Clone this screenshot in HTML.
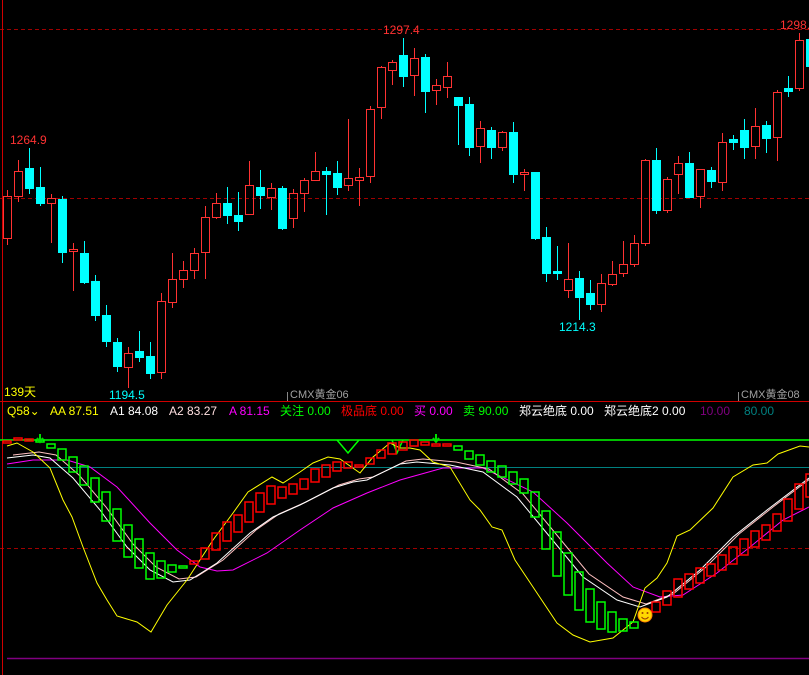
<!DOCTYPE html>
<html><head><meta charset="utf-8"><style>
html,body{margin:0;padding:0;background:#000;width:809px;height:675px;overflow:hidden}
#c{position:absolute;left:0;top:0}
.t{position:absolute;font-family:"Liberation Sans","Noto Sans CJK SC",sans-serif;font-size:12px;white-space:nowrap;line-height:14px}
</style></head><body>
<svg id="c" width="809" height="675" xmlns="http://www.w3.org/2000/svg"></svg>
<div class="t" style="left:10px;top:133px;color:#ff3232">1264.9</div>
<div class="t" style="left:383px;top:23px;color:#ff3232">1297.4</div>
<div class="t" style="left:780px;top:18px;color:#ff3232">1298.</div>
<div class="t" style="left:559px;top:320px;color:#00ffff">1214.3</div>
<div class="t" style="left:109px;top:388px;color:#00ffff">1194.5</div>
<div class="t" style="left:4px;top:385px;color:#ffff00">139天</div>
<div class="t" style="left:290px;top:388px;color:#a0a0a0;font-size:11px">CMX黄金06</div>
<div class="t" style="left:741px;top:388px;color:#a0a0a0;font-size:11px">CMX黄金08</div>
<div class="t" style="left:7px;top:404px;color:#ffff00">Q58⌄</div>
<div class="t" style="left:50px;top:404px;color:#ffff00">AA 87.51</div>
<div class="t" style="left:110px;top:404px;color:#ffffff">A1 84.08</div>
<div class="t" style="left:169px;top:404px;color:#ffe0e0">A2 83.27</div>
<div class="t" style="left:229px;top:404px;color:#ff00ff">A 81.15</div>
<div class="t" style="left:280px;top:404px;color:#00ff00">关注 0.00</div>
<div class="t" style="left:341px;top:404px;color:#ff0000">极品底 0.00</div>
<div class="t" style="left:414px;top:404px;color:#ff00ff">买 0.00</div>
<div class="t" style="left:463px;top:404px;color:#00ff00">卖 90.00</div>
<div class="t" style="left:519px;top:404px;color:#ffffff">郑云绝底 0.00</div>
<div class="t" style="left:604px;top:404px;color:#ffffff">郑云绝底2 0.00</div>
<div class="t" style="left:700px;top:404px;color:#800080">10.00</div>
<div class="t" style="left:744px;top:404px;color:#008080">80.00</div>
<script>
var s='';
function L(x1,y1,x2,y2,c,w,d){s+='<line x1="'+x1+'" y1="'+y1+'" x2="'+x2+'" y2="'+y2+'" stroke="'+c+'" stroke-width="'+(w||1)+'"'+(d?' stroke-dasharray="'+d+'"':'')+'/>';}
function P(pts,c,w){s+='<polyline fill="none" stroke="'+c+'" stroke-width="'+(w||1)+'" points="'+pts.map(function(p){return p[0]+','+p[1]}).join(' ')+'"/>';}
// grid
L(0,29.5,809,29.5,'#a00000',1,'4,3');
L(0,198.5,809,198.5,'#a00000',1,'4,3');
L(0,401.5,809,401.5,'#d00000',1);
L(0,548.5,809,548.5,'#a00000',1,'4,3');
L(2.5,0,2.5,675,'#d00000',1);
L(287.5,392,287.5,401,'#888',1);L(738.5,392,738.5,401,'#888',1);
// candles: x, type(u/d), top, bottom, hi, lo
var C=[[7,'u',196,238,190,245],[18,'u',171,196,160,202],[29,'d',168,188,148,194],[40,'d',187,203,167,206],[51,'u',198,203,194,243],[62,'d',199,252,196,263],[73,'u',249,251,243,291],[84,'d',253,282,241,284],[95,'d',281,315,275,321],[106,'d',315,341,305,347],[117,'d',342,366,338,372],[128,'u',353,367,347,388],[139,'d',351,357,331,362],[150,'d',356,373,342,379],[161,'u',301,372,293,379],[172,'u',279,302,253,308],[183,'u',270,279,261,288],[194,'u',253,270,248,279],[205,'u',217,252,206,279],[216,'u',203,217,193,219],[227,'d',203,215,187,224],[238,'d',215,221,192,231],[249,'u',185,214,161,214],[260,'d',187,195,170,209],
[271,'u',188,197,183,210],[282,'d',188,228,186,230],[293,'u',193,218,189,228],[304,'u',180,193,178,212],[315,'u',171,180,152,180],[326,'d',171,174,167,215],[337,'d',173,187,161,195],[348,'u',178,185,119,191],[359,'u',177,180,168,206],[370,'u',109,176,106,183],[381,'u',67,107,66,119],[392,'u',62,70,60,85],[403,'d',55,76,38,87],[414,'u',58,75,48,96],[425,'d',57,91,54,113],[436,'u',85,90,79,105],[447,'u',76,87,62,98],[458,'d',97,105,97,145],[469,'d',104,147,97,156],[480,'u',128,146,121,163],[491,'d',130,147,127,159],[502,'u',132,147,131,151],[513,'d',132,174,122,183],[524,'u',172,174,169,191],[535,'d',172,238,172,240],
[546,'d',237,273,227,282],[557,'d',271,273,246,280],[568,'u',279,290,243,298],[579,'d',278,297,271,320],[590,'d',293,304,280,310],[601,'u',283,304,274,312],[612,'u',274,284,261,286],[623,'u',264,273,241,277],[634,'u',243,264,235,267],[645,'u',160,243,159,246],[656,'d',160,210,148,214],[667,'u',179,210,177,213],[678,'u',163,174,156,194],[689,'d',163,197,152,198],[700,'u',169,196,169,208],[711,'d',170,181,167,188],[722,'u',142,182,133,191],[733,'d',139,142,135,150],[744,'d',130,147,119,159],[755,'u',126,146,108,159],[766,'d',125,138,121,153],[777,'u',92,137,90,161],[788,'d',88,91,76,97],[799,'u',40,88,33,91],[810,'d',39,66,36,70]];
C.forEach(function(c){var x=c[0],col=c[1]=='u'?'#ff3232':'#00ffff';
 L(x+.5,c[4],x+.5,c[2],col);L(x+.5,c[3],x+.5,c[5],col);
 var h=Math.max(c[3]-c[2],1);
 if(c[1]=='u')s+='<rect x="'+(x-3.5)+'" y="'+(c[2]+.5)+'" width="8" height="'+(h)+'" fill="none" stroke="'+col+'"/>';
 else s+='<rect x="'+(x-4)+'" y="'+c[2]+'" width="9" height="'+(h+1)+'" fill="'+col+'"/>';});
// indicator horizontal lines
L(0,440,809,440,'#00ff00',1.5);
L(7,467.5,809,467.5,'#008080',1);
L(7,658.5,809,658.5,'#800080',1.5);
P([[337,440],[348,453],[359,440]],'#00ff00',1.5);
P([[392,440],[397,453],[403,440]],'#00ff00',1.5);
// magenta
P([[7,464],[33,460],[67,460],[90,467],[117,487],[150,523],[177,550],[200,567],[217,571],[233,570],[267,553],[300,530],[333,508],[367,493],[400,480],[443,468],[483,468],[533,492],[567,523],[607,563],[633,587],[660,597],[683,595],[717,573],[750,547],[783,520],[809,507]],'#ff00ff',1);
// white/pink
var W=[[7,458],[33,455],[50,458],[73,478],[100,510],[127,547],[150,570],[173,582],[190,580],[217,563],[250,533],[273,517],[300,505],[333,488],[353,482],[367,480],[400,464],[417,462],[450,465],[483,472],[517,497],[550,537],[583,577],[617,600],[640,607],[667,597],[700,570],[733,537],[767,510],[809,478]];
P(W.map(function(p){return [p[0]+6,p[1]-3]}),'#ffc0c0',1);
P(W,'#ffffff',1);
// yellow
P([[7,446],[17,443],[33,452],[50,468],[63,500],[72,517],[83,547],[97,583],[107,600],[117,616],[137,622],[151,632],[167,605],[187,580],[213,540],[233,513],[248,492],[272,477],[283,483],[300,472],[313,463],[328,457],[340,459],[360,473],[373,457],[390,443],[400,448],[410,448],[420,450],[433,462],[450,467],[470,500],[480,510],[492,527],[502,530],[515,560],[533,587],[557,623],[573,635],[590,642],[613,638],[633,622],[645,588],[657,578],[667,563],[677,536],[690,530],[713,508],[733,477],[753,465],[767,463],[778,454],[800,446],[809,447]],'#ffff00',1);
// indicator boxes: x, color g/r, top, bottom
var B=[[7,'r',441,443],[18,'r',438,440],[29,'r',439,440],[40,'g',440,442],[51,'g',444,448],[62,'g',449,460],[73,'g',457,472],[84,'g',466,485],[95,'g',478,502],[106,'g',492,521],[117,'g',509,541],[128,'g',525,557],[139,'g',539,568],[150,'g',553,579],[161,'g',561,578],[172,'g',565,572],[183,'g',566,568],[194,'r',561,564],[205,'r',548,559],[216,'r',533,550],[227,'r',522,541],[238,'r',515,532],[249,'r',502,522],[260,'r',493,512],[271,'r',486,504],[282,'r',487,498],[293,'r',484,494],[304,'r',479,489],[315,'r',469,482],[326,'r',465,477],[337,'r',462,471],[348,'r',462,468],[359,'r',465,467],[370,'r',458,464],[381,'r',450,458],[392,'r',443,454],[403,'r',442,450],[414,'r',440,446],[425,'r',442,445],[436,'r',444,445],[447,'r',444,445],[458,'g',446,450],[469,'g',451,459],[480,'g',455,465],[491,'g',461,472],[502,'g',466,477],[513,'g',472,484],[524,'g',479,493],[535,'g',492,517],[546,'g',511,549],[557,'g',532,576],[568,'g',553,595],[579,'g',572,610],[590,'g',589,622],[601,'g',602,629],[612,'g',612,632],[623,'g',619,631],[634,'g',622,628],[656,'r',602,612],[667,'r',591,605],[678,'r',579,597],[689,'r',574,589],[700,'r',568,583],[711,'r',564,576],[722,'r',555,570],[733,'r',547,564],[744,'r',539,555],[755,'r',531,547],[766,'r',525,540],[777,'r',514,531],[788,'r',499,521],[799,'r',484,509],[810,'r',474,497]];
B.forEach(function(b){var col=b[1]=='g'?'#00ff00':'#ff0000';
 s+='<rect x="'+(b[0]-4)+'" y="'+b[2]+'" width="8" height="'+Math.max(b[3]-b[2],2)+'" fill="none" stroke="'+col+'" stroke-width="1.5"/>';});
// arrows
function A(x){s+='<path d="M'+x+' 434 V441 M'+(x-3)+' 438 L'+x+' 442 L'+(x+3)+' 438" stroke="#00dd00" stroke-width="2" fill="none"/>';}
A(40);A(436);
// smiley
s+='<circle cx="645" cy="615" r="7" fill="#ffd800" stroke="#ff8000" stroke-width="1"/><circle cx="642.5" cy="613" r="1" fill="#a04000"/><circle cx="647.5" cy="613" r="1" fill="#a04000"/><path d="M641.5 617 Q645 621 648.5 617" stroke="#a04000" fill="none"/>';
document.getElementById('c').innerHTML=s;
</script>
</body></html>
